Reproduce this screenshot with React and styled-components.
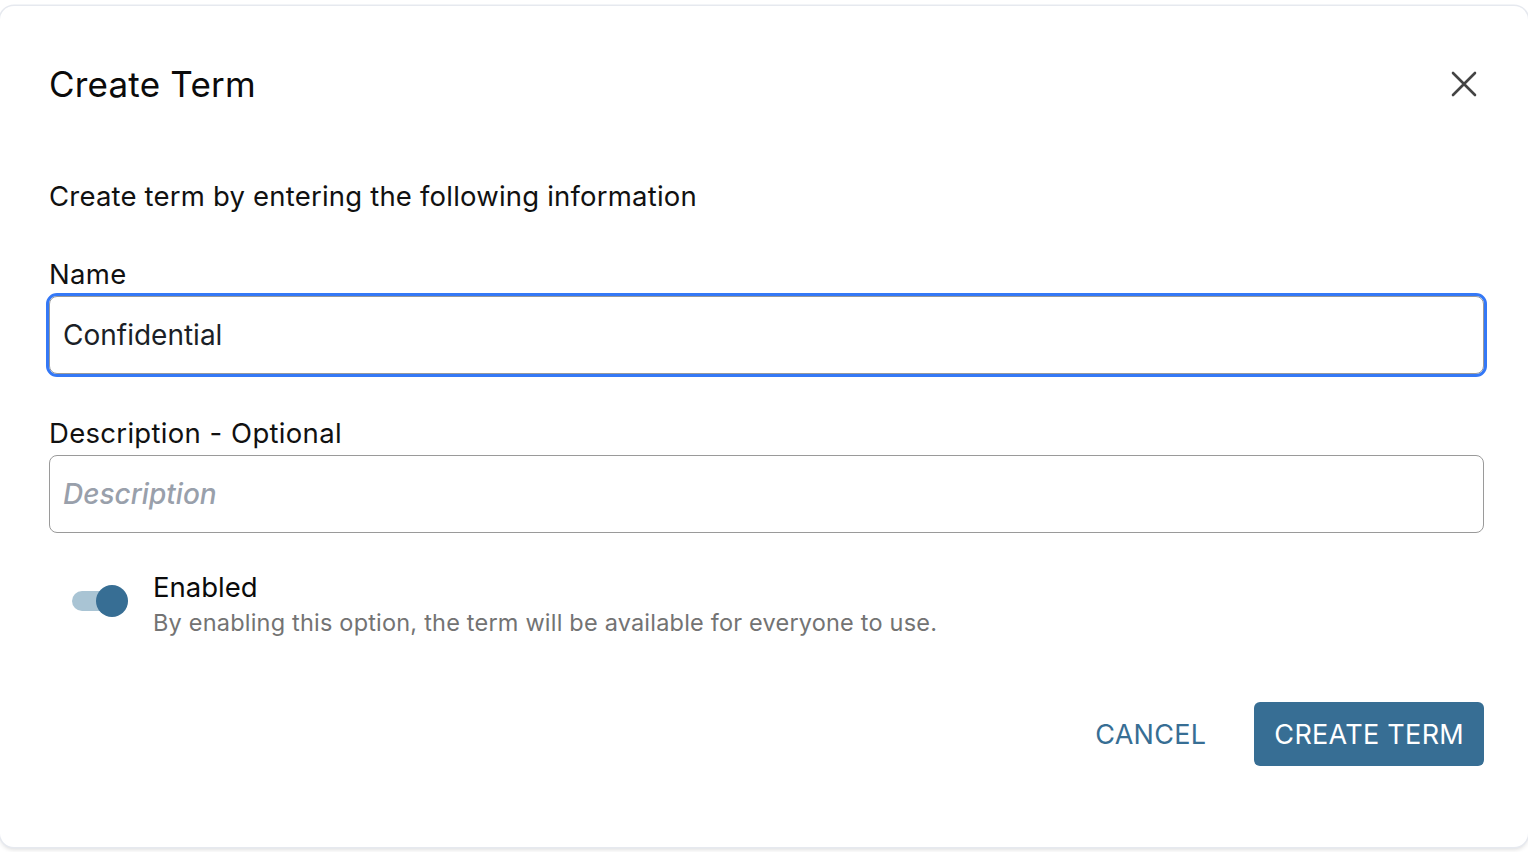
import React, { useState } from "react";
import styled, { createGlobalStyle } from "styled-components";

const Global = createGlobalStyle`
  html, body { margin: 0; padding: 0; background: #ffffff; }
  body { font-family: Inter, "Noto Sans", sans-serif; color: #111; }
  * { box-sizing: border-box; }
`;

const Page = styled.div`
  width: 1528px;
  height: 852px;
  padding-top: 6px;
  overflow: hidden;
  background: #fff;
`;

const Dialog = styled.div`
  width: 1528px;
  height: 841px;
  background: #fff;
  border-radius: 14px;
  box-shadow: 0 0 0 1.5px #e6e9ef, 0 3px 4px rgba(0, 0, 0, 0.12);
  padding: 52px 44px 0 49px;
  display: flex;
  flex-direction: column;
`;

const Header = styled.div`
  display: flex;
  align-items: center;
  justify-content: space-between;
  height: 52px;
`;

const Title = styled.h2`
  margin: 0;
  font-size: 35px;
  font-weight: 400;
  color: #0b0b0b;
  letter-spacing: 0.2px;
`;

const CloseBtn = styled.button`
  border: none;
  background: none;
  padding: 0;
  width: 30px;
  height: 30px;
  display: flex;
  align-items: center;
  justify-content: center;
  margin-right: 5px;
  cursor: pointer;
`;

const Subtitle = styled.p`
  margin: 70px 0 0;
  font-size: 27.5px;
  line-height: 32px;
  letter-spacing: 0.2px;
  color: #111;
`;

const Field = styled.div`
  display: flex;
  flex-direction: column;
  margin-top: ${(p) => p.$mt}px;
`;

const Label = styled.label`
  font-size: 27.5px;
  line-height: 32px;
  letter-spacing: 0.3px;
  word-spacing: 0.5px;
  color: #111;
  margin-bottom: 6px;
`;

const Input = styled.input`
  height: 78px;
  width: 100%;
  border: 1.5px solid #9a9a9a;
  border-radius: 8px;
  padding: 0 13px;
  font-family: Inter, "Noto Sans", sans-serif;
  font-size: 28px;
  color: #1b1f27;
  outline: ${(p) => (p.$focused ? "3px solid #3478f6" : "none")};
  outline-offset: 0;
  background: #fff;
  &::placeholder {
    color: #99a0ab;
    font-style: italic;
    font-weight: 500;
  }
`;

const ToggleRow = styled.div`
  display: flex;
  align-items: flex-start;
  margin-top: 37px;
  padding-left: 23px;
`;

const Track = styled.button`
  position: relative;
  width: 54px;
  height: 20px;
  margin-top: 21px;
  border: none;
  border-radius: 10px;
  background: ${(p) => (p.$on ? "#a9c4d4" : "#c9c9c9")};
  padding: 0;
  cursor: pointer;
  flex-shrink: 0;
`;

const Knob = styled.span`
  position: absolute;
  top: -6px;
  left: ${(p) => (p.$on ? "24px" : "-2px")};
  width: 32px;
  height: 32px;
  border-radius: 50%;
  background: ${(p) => (p.$on ? "#376e94" : "#f5f5f5")};
`;

const ToggleText = styled.div`
  display: flex;
  flex-direction: column;
  margin-left: 27px;
`;

const ToggleTitle = styled.span`
  font-size: 27.5px;
  line-height: 34px;
  color: #0b0b0b;
`;

const ToggleHelp = styled.span`
  font-size: 23.5px;
  line-height: 32px;
  color: #737373;
  margin-top: 3px;
  letter-spacing: 0.2px;
`;

const Footer = styled.div`
  display: flex;
  justify-content: flex-end;
  align-items: center;
  gap: 28px;
  margin-top: 63px;
`;

const Button = styled.button`
  height: 64px;
  padding: 0 20px;
  border: none;
  border-radius: 6px;
  font-family: Inter, "Noto Sans", sans-serif;
  font-size: 27px;
  letter-spacing: 0.3px;
  text-transform: uppercase;
  cursor: pointer;
  background: ${(p) => (p.$primary ? "#376e94" : "transparent")};
  color: ${(p) => (p.$primary ? "#ffffff" : "#376e94")};
`;

export default function App() {
  const [on, setOn] = useState(true);
  const [name, setName] = useState("Confidential");
  return (
    <Page>
      <Global />
      <Dialog>
        <Header>
          <Title>Create Term</Title>
          <CloseBtn aria-label="Close">
            <svg width="26" height="26" viewBox="0 0 26 26">
              <path d="M2 2 L24 24 M24 2 L2 24" stroke="#444" strokeWidth="2.6" strokeLinecap="round" />
            </svg>
          </CloseBtn>
        </Header>
        <Subtitle>Create term by entering the following information</Subtitle>
        <Field $mt={46}>
          <Label>Name</Label>
          <Input $focused value={name} onChange={(e) => setName(e.target.value)} />
        </Field>
        <Field $mt={43}>
          <Label>Description - Optional</Label>
          <Input placeholder="Description" />
        </Field>
        <ToggleRow>
          <Track $on={on} onClick={() => setOn(!on)}>
            <Knob $on={on} />
          </Track>
          <ToggleText>
            <ToggleTitle>Enabled</ToggleTitle>
            <ToggleHelp>By enabling this option, the term will be available for everyone to use.</ToggleHelp>
          </ToggleText>
        </ToggleRow>
        <Footer>
          <Button>Cancel</Button>
          <Button $primary>Create Term</Button>
        </Footer>
      </Dialog>
    </Page>
  );
}
